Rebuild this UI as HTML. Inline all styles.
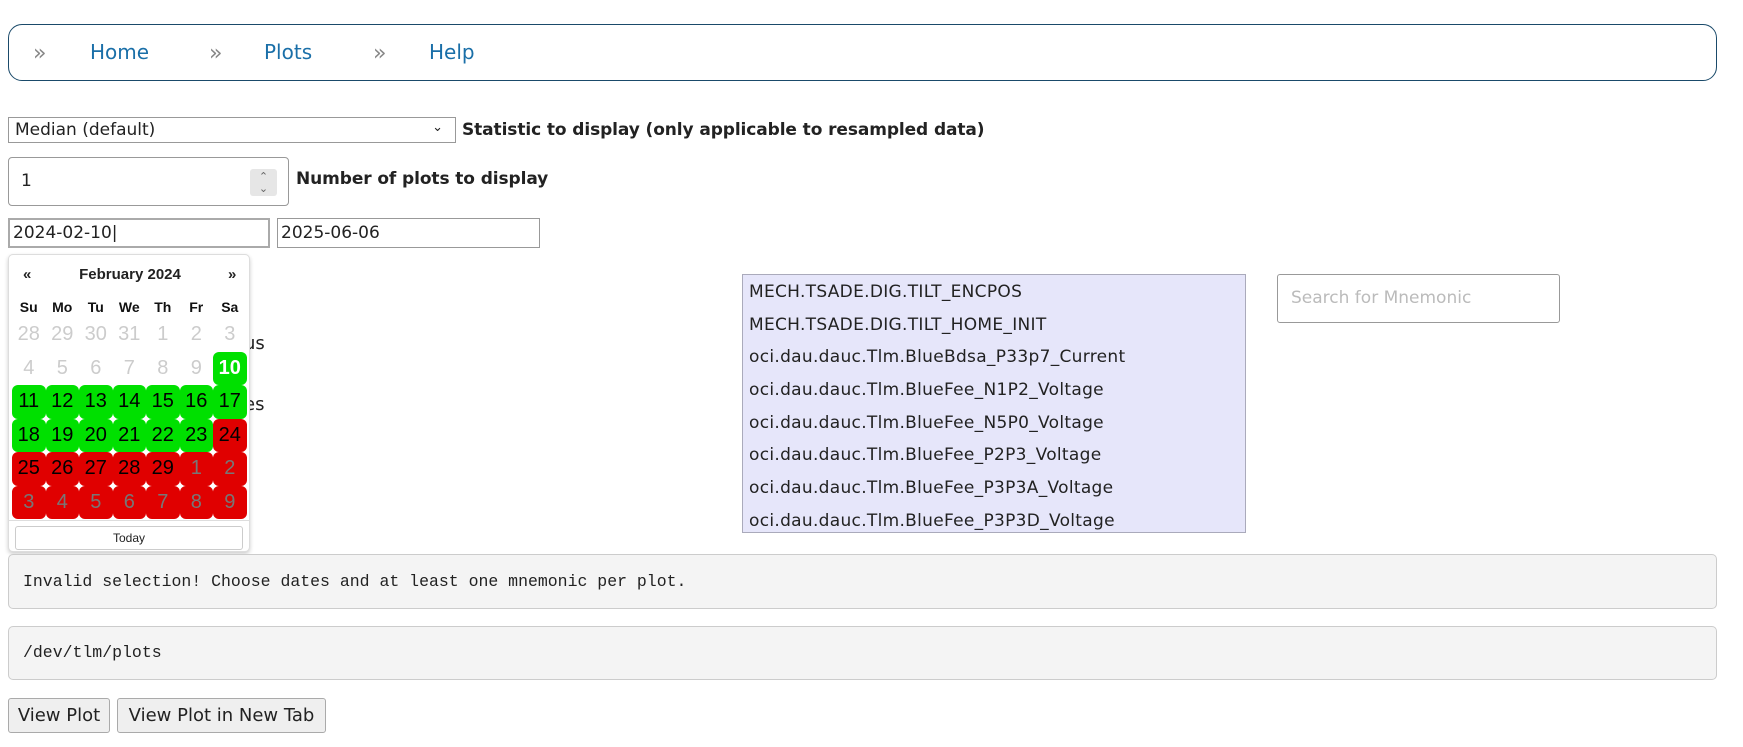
<!DOCTYPE html>
<html><head><meta charset="utf-8"><style>
*{box-sizing:border-box}
body{margin:0;width:1743px;height:747px;background:#fff;font-family:"DejaVu Sans","Liberation Sans",sans-serif;color:#222;position:relative;overflow:hidden}
.a{position:absolute}
.nav{left:8px;top:24px;width:1709px;height:57px;border:1px solid #1a4a6a;border-radius:14px}
.nav span{position:absolute;top:15px;font-size:20px;color:#1a6fa8}
.nav .r{color:#888;font-size:22px;top:16px}
.inp{border:1px solid #999;background:#fff;font-size:17px;padding-left:6px}
.lbl{font-weight:bold;font-size:17px;color:#222;letter-spacing:-0.1px}
.cal{left:8px;top:254px;width:242px;height:298px;background:#fff;border:1px solid #ddd;border-radius:5px;box-shadow:0 2px 4px rgba(0,0,0,.2);font-family:"Liberation Sans",sans-serif}
.c{position:absolute;width:33.5px;height:33.5px;text-align:center;line-height:33.5px;font-size:20px;border-radius:6px}
.o{color:#ccc}.g{background:#00e000;color:#000}.rd{background:#e00000;color:#000}.rg{background:#e00000;color:#777}
.wd{position:absolute;top:44px;width:33.5px;text-align:center;font-weight:bold;font-size:14px;color:#111}
.box{left:8px;width:1709px;background:#f4f4f4;border:1px solid #ccc;border-radius:5px;font-family:"Liberation Mono",monospace;font-size:16.5px;padding-left:14px}
.btn{top:698px;height:35px;background:#efefef;border:1px solid #aaa;border-radius:3px;font-size:18px;text-align:center;line-height:33px}
.li{position:absolute;left:6px;font-size:17px;color:#222;letter-spacing:0.3px}
</style></head><body>
<div class="a nav">
<span class="r" style="left:24px">»</span><span style="left:81px">Home</span>
<span class="r" style="left:200px">»</span><span style="left:255px">Plots</span>
<span class="r" style="left:364px">»</span><span style="left:420px">Help</span>
</div>

<div class="a inp" style="left:8px;top:117px;width:448px;height:26px;font-size:17px;line-height:24px">Median (default)<span style="position:absolute;right:12px;top:-2px;font-size:13px">&#8964;</span></div>
<div class="a lbl" style="left:462px;top:120px">Statistic to display (only applicable to resampled data)</div>

<div class="a inp" style="left:8px;top:157px;width:281px;height:49px;border-radius:4px;line-height:47px;padding-left:12px">1
<div style="position:absolute;left:241px;top:11px;width:27px;height:27px;background:#e6e6e6;border-radius:3px;font-size:11px;line-height:12px;text-align:center;color:#666;padding-top:2px">&#8963;<br>&#8964;</div></div>
<div class="a lbl" style="left:296px;top:169px">Number of plots to display</div>

<div class="a inp" style="left:8px;top:218px;width:262px;height:30px;border:2px solid #aaa;line-height:26px;padding-left:3px">2024-02-10|</div>
<div class="a inp" style="left:277px;top:218px;width:263px;height:30px;line-height:28px;padding-left:3px">2025-06-06</div>

<div class="a" style="left:244px;top:333px;font-size:18px">us</div>
<div class="a" style="left:244px;top:394px;font-size:18px">es</div>

<div class="a cal">
<div style="position:absolute;top:11px;left:14px;font-weight:bold;font-size:15px">«</div>
<div style="position:absolute;top:11px;left:0;width:242px;text-align:center;font-weight:bold;font-size:15px">February 2024</div>
<div style="position:absolute;top:11px;left:219px;font-weight:bold;font-size:15px">»</div>
<div class="wd" style="left:3px">Su</div><div class="wd" style="left:36.5px">Mo</div><div class="wd" style="left:70px">Tu</div><div class="wd" style="left:103.5px">We</div><div class="wd" style="left:137px">Th</div><div class="wd" style="left:170.5px">Fr</div><div class="wd" style="left:204px">Sa</div>
<div class="c o" style="left:3px;top:63px">28</div><div class="c o" style="left:36.5px;top:63px">29</div><div class="c o" style="left:70px;top:63px">30</div><div class="c o" style="left:103.5px;top:63px">31</div><div class="c o" style="left:137px;top:63px">1</div><div class="c o" style="left:170.5px;top:63px">2</div><div class="c o" style="left:204px;top:63px">3</div>
<div class="c o" style="left:3px;top:96.5px">4</div><div class="c o" style="left:36.5px;top:96.5px">5</div><div class="c o" style="left:70px;top:96.5px">6</div><div class="c o" style="left:103.5px;top:96.5px">7</div><div class="c o" style="left:137px;top:96.5px">8</div><div class="c o" style="left:170.5px;top:96.5px">9</div><div class="c g" style="left:204px;top:96.5px;color:#fff;font-weight:bold">10</div>
<div class="c g" style="left:3px;top:130px">11</div><div class="c g" style="left:36.5px;top:130px">12</div><div class="c g" style="left:70px;top:130px">13</div><div class="c g" style="left:103.5px;top:130px">14</div><div class="c g" style="left:137px;top:130px">15</div><div class="c g" style="left:170.5px;top:130px">16</div><div class="c g" style="left:204px;top:130px">17</div>
<div class="c g" style="left:3px;top:163.5px">18</div><div class="c g" style="left:36.5px;top:163.5px">19</div><div class="c g" style="left:70px;top:163.5px">20</div><div class="c g" style="left:103.5px;top:163.5px">21</div><div class="c g" style="left:137px;top:163.5px">22</div><div class="c g" style="left:170.5px;top:163.5px">23</div><div class="c rd" style="left:204px;top:163.5px">24</div>
<div class="c rd" style="left:3px;top:197px">25</div><div class="c rd" style="left:36.5px;top:197px">26</div><div class="c rd" style="left:70px;top:197px">27</div><div class="c rd" style="left:103.5px;top:197px">28</div><div class="c rd" style="left:137px;top:197px">29</div><div class="c rg" style="left:170.5px;top:197px">1</div><div class="c rg" style="left:204px;top:197px">2</div>
<div class="c rg" style="left:3px;top:230.5px">3</div><div class="c rg" style="left:36.5px;top:230.5px">4</div><div class="c rg" style="left:70px;top:230.5px">5</div><div class="c rg" style="left:103.5px;top:230.5px">6</div><div class="c rg" style="left:137px;top:230.5px">7</div><div class="c rg" style="left:170.5px;top:230.5px">8</div><div class="c rg" style="left:204px;top:230.5px">9</div>
<div style="position:absolute;left:0;top:265px;width:240px;border-top:1px solid #ddd"></div>
<div style="position:absolute;left:6px;top:271px;width:228px;height:24px;border:1px solid #ccc;border-radius:3px;text-align:center;font-size:12px;line-height:22px">Today</div>
</div>

<div class="a" style="left:742px;top:274px;width:504px;height:259px;background:#e6e6fa;border:1px solid #aab;overflow:hidden">
<div class="li" style="top:7px">MECH.TSADE.DIG.TILT_ENCPOS</div>
<div class="li" style="top:40px">MECH.TSADE.DIG.TILT_HOME_INIT</div>
<div class="li" style="top:72px">oci.dau.dauc.Tlm.BlueBdsa_P33p7_Current</div>
<div class="li" style="top:105px">oci.dau.dauc.Tlm.BlueFee_N1P2_Voltage</div>
<div class="li" style="top:138px">oci.dau.dauc.Tlm.BlueFee_N5P0_Voltage</div>
<div class="li" style="top:170px">oci.dau.dauc.Tlm.BlueFee_P2P3_Voltage</div>
<div class="li" style="top:203px">oci.dau.dauc.Tlm.BlueFee_P3P3A_Voltage</div>
<div class="li" style="top:236px">oci.dau.dauc.Tlm.BlueFee_P3P3D_Voltage</div>
</div>
<div class="a" style="left:1277px;top:274px;width:283px;height:49px;border:1px solid #999;border-radius:3px;font-size:17px;color:#bbb;line-height:47px;padding-left:13px">Search for Mnemonic</div>

<div class="a box" style="top:554px;height:55px;line-height:53px">Invalid selection! Choose dates and at least one mnemonic per plot.</div>
<div class="a box" style="top:626px;height:54px;line-height:52px">/dev/tlm/plots</div>

<div class="a btn" style="left:8px;width:102px">View Plot</div>
<div class="a btn" style="left:117px;width:209px">View Plot in New Tab</div>
</body></html>
